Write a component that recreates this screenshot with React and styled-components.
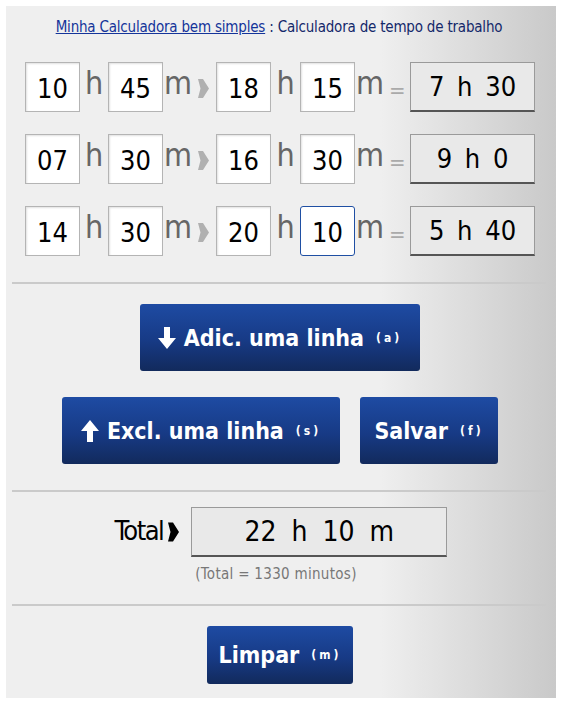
import React from "react";
import styled, { createGlobalStyle } from "styled-components";

const Global = createGlobalStyle`
  body {
    margin: 0;
    background: #fff;
    font-family: "DejaVu Sans Condensed", "DejaVu Sans", sans-serif;
  }
`;

const Panel = styled.div`
  margin: 6px 5px 6px 6px;
  height: 692px;
  box-sizing: border-box;
  background: linear-gradient(to right, #efefef 0%, #efefef 68%, #c9c9c9 100%);
  padding: 12px 10px 0 6px;
`;

const Title = styled.div`
  text-align: center;
  font-size: 15px;
  color: #14286a;
  letter-spacing: -0.2px;
  a {
    color: #14349a;
    text-decoration: underline;
  }
`;

const Rows = styled.div`
  display: flex;
  flex-direction: column;
  gap: 22px;
  padding: 26px 0 26px 13px;
`;

const Row = styled.div`
  display: flex;
  align-items: center;
  height: 50px;
`;

const Field = styled.div`
  flex: none;
  width: 55px;
  height: 50px;
  box-sizing: border-box;
  background: #fff;
  border: 1px solid ${(p) => (p.$focus ? "#1f4fa3" : "#b4b4b4")};
  border-radius: ${(p) => (p.$focus ? "3px" : "0")};
  box-shadow: ${(p) => (p.$focus ? "none" : "inset 1px 1px 2px rgba(0,0,0,0.12)")};
  display: flex;
  align-items: center;
  justify-content: center;
  font-size: 27px;
  color: #000;
  padding-top: 2px;
`;

const Unit = styled.span`
  flex: none;
  box-sizing: border-box;
  font-size: 32px;
  color: #666;
  width: ${(p) => p.$w}px;
  text-align: center;
  margin-top: -8px;
`;

const Arrow = ({ color = "#b0b0b0", w = 11, h = 19 }) => (
  <svg width={w} height={h} viewBox="0 0 11 19">
    <path d="M0 0 L5 0 L11 9.5 L5 19 L0 19 L2.5 9.5 Z" fill={color} />
  </svg>
);

const ArrowSlot = styled.span`
  flex: none;
  box-sizing: border-box;
  width: 23px;
  display: flex;
  padding-left: 5px;
  margin-top: 2px;
`;

const Equals = styled.span`
  flex: none;
  box-sizing: border-box;
  font-size: 22px;
  color: #aaa;
  width: 25px;
  padding-left: 4px;
  margin-top: 6px;
`;

const Result = styled.div`
  flex: none;
  width: 125px;
  height: 50px;
  box-sizing: border-box;
  background: #e9e9e9;
  border: 1px solid #9a9a9a;
  border-bottom: 2px solid #555;
  display: flex;
  align-items: center;
  justify-content: center;
  font-size: 27px;
  color: #000;
  word-spacing: 5px;
`;

const Divider = styled.hr`
  margin: 0;
  border: none;
  border-top: 2px solid #cacaca;
`;

const Buttons = styled.div`
  display: flex;
  flex-direction: column;
  align-items: center;
  gap: 26px;
  padding: 20px 0 26px;
`;

const ButtonRow = styled.div`
  display: flex;
  gap: 20px;
  justify-content: center;
  margin-left: ${(p) => p.$shift || 0}px;
`;

const Button = styled.button`
  height: ${(p) => p.$h || 67}px;
  width: ${(p) => p.$w}px;
  border: none;
  border-radius: 3px;
  background: linear-gradient(to bottom, #1e4ba3 0%, #173a85 55%, #122a5c 100%);
  color: #fff;
  font-family: inherit;
  font-size: 23px;
  font-weight: bold;
  display: flex;
  align-items: center;
  justify-content: center;
  gap: 8px;
  cursor: pointer;
  padding: 0;
`;

const Key = styled.span`
  font-size: 12px;
  letter-spacing: 3px;
  margin-left: 4px;
`;

const TotalArea = styled.div`
  display: flex;
  flex-direction: column;
  align-items: center;
  padding: 15px 0 21px;
`;

const TotalRow = styled.div`
  display: flex;
  align-items: center;
  margin-left: 4px;
`;

const TotalLabel = styled.span`
  font-size: 27px;
  color: #000;
  letter-spacing: -1.5px;
  margin-right: 5px;
  margin-top: -4px;
`;

const TotalBox = styled(Result)`
  width: 256px;
  margin-left: 12px;
  font-size: 28px;
  word-spacing: 7px;
`;

const Minutes = styled.div`
  font-size: 15px;
  color: #777;
  letter-spacing: 0.3px;
  margin: 8px 0 0 -6px;
`;

const rows = [
  ["10", "45", "18", "15", "7 h 30"],
  ["07", "30", "16", "30", "9 h 0"],
  ["14", "30", "20", "10", "5 h 40"],
];

const DownIcon = () => (
  <svg width="18" height="22" viewBox="0 0 18 22">
    <path d="M6 0 H12 V11 H18 L9 22 L0 11 H6 Z" fill="#fff" />
  </svg>
);

const UpIcon = () => (
  <svg width="18" height="22" viewBox="0 0 18 22">
    <path d="M6 22 H12 V11 H18 L9 0 L0 11 H6 Z" fill="#fff" />
  </svg>
);

export default function App() {
  return (
    <>
      <Global />
      <Panel>
        <Title>
          <a>Minha Calculadora bem simples</a> : Calculadora de tempo de trabalho
        </Title>
        <Rows>
          {rows.map((r, i) => (
            <Row key={i}>
              <Field>{r[0]}</Field>
              <Unit $w={28}>h</Unit>
              <Field>{r[1]}</Field>
              <Unit $w={30}>m</Unit>
              <ArrowSlot>
                <Arrow />
              </ArrowSlot>
              <Field>{r[2]}</Field>
              <Unit $w={29}>h</Unit>
              <Field $focus={i === 2}>{r[3]}</Field>
              <Unit $w={30}>m</Unit>
              <Equals>=</Equals>
              <Result>{r[4]}</Result>
            </Row>
          ))}
        </Rows>
        <Divider />
        <Buttons>
          <ButtonRow $shift={2}>
            <Button $w={280}>
              <DownIcon /> Adic. uma linha <Key>(a)</Key>
            </Button>
          </ButtonRow>
          <ButtonRow $shift={2}>
            <Button $w={278}>
              <UpIcon /> Excl. uma linha <Key>(s)</Key>
            </Button>
            <Button $w={138}>
              Salvar <Key>(f)</Key>
            </Button>
          </ButtonRow>
        </Buttons>
        <Divider />
        <TotalArea>
          <TotalRow>
            <TotalLabel>Total</TotalLabel>
            <Arrow color="#000" w={11} h={24} />
            <TotalBox>22 h 10 m</TotalBox>
          </TotalRow>
          <Minutes>(Total = 1330 minutos)</Minutes>
        </TotalArea>
        <Divider />
        <Buttons>
          <ButtonRow $shift={2}>
            <Button $w={146} $h={58}>
              Limpar <Key>(m)</Key>
            </Button>
          </ButtonRow>
        </Buttons>
      </Panel>
    </>
  );
}
